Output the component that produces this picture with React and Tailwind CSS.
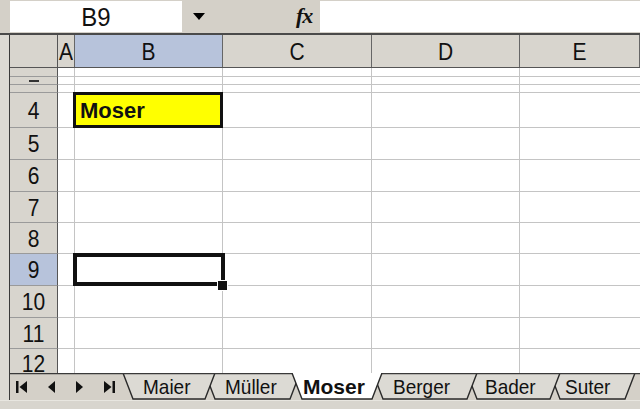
import React from "react";

const FONT = { fontFamily: '"Liberation Sans", Arial, sans-serif' };

const rows = [
  { label: "", h: "h-[9px]" },
  { label: "", h: "h-[8px]", dash: true },
  { label: "", h: "h-[8px]" },
  { label: "4", h: "h-[35px]", moser: true },
  { label: "5", h: "h-[32px]" },
  { label: "6", h: "h-[32px]" },
  { label: "7", h: "h-[31px]" },
  { label: "8", h: "h-[31px]" },
  { label: "9", h: "h-[32px]", sel: true },
  { label: "10", h: "h-[32px]" },
  { label: "11", h: "h-[31px]" },
  { label: "12", h: "h-[24px]", last: true },
];

function TopBar() {
  return (
    <div className="h-[35px] shrink-0 flex items-start bg-[#d4d0c8] border-b-2 border-[#4a4a4a]">
      <div className="ml-[10px] mt-[1px] w-[172px] h-[31px] bg-white flex items-center justify-center">
        <span className="text-[24px] leading-none text-[#111] inline-block scale-y-110">B9</span>
      </div>
      <div className="w-[138px] h-[32px] flex items-center">
        <svg width="24" height="12" viewBox="0 0 24 12" className="ml-[9px]">
          <polygon points="2,3 14,3 8,10" fill="#000" />
        </svg>
        <span
          className="ml-[81px] text-[22px] italic font-bold leading-none text-[#111] tracking-[-1px]"
          style={{ fontFamily: '"Liberation Serif", "Times New Roman", serif' }}
        >
          fx
        </span>
      </div>
      <div className="flex-1 mt-[1px] h-[31px] bg-white" />
    </div>
  );
}

function HeaderRow() {
  const cols = [
    { l: "A", w: "w-[17px]" },
    { l: "B", w: "w-[148px]", sel: true },
    { l: "C", w: "w-[149px]" },
    { l: "D", w: "w-[148px]" },
    { l: "E", w: "flex-1" },
  ];
  return (
    <div className="h-[33px] shrink-0 flex border-b border-[#555]">
      <div className="w-[48px] shrink-0 bg-[#d8d5ce] border-r border-[#555]" />
      {cols.map((c) => (
        <div
          key={c.l}
          className={`${c.w} shrink-0 overflow-hidden flex items-center justify-center border-r border-[#666] ${
            c.sel ? "bg-[#b7c3db]" : "bg-[#d8d5ce]"
          }`}
        >
          <span className="text-[21px] leading-none text-[#111] inline-block scale-y-115">{c.l}</span>
        </div>
      ))}
    </div>
  );
}

function Row({ r }) {
  const bb = r.last ? "" : "border-b";
  return (
    <div className={`${r.h} shrink-0 flex`}>
      <div
        className={`w-[48px] shrink-0 overflow-hidden flex items-center justify-center border-r border-[#555] ${
          r.last ? "" : "border-b border-b-[#9a9a9a]"
        } ${r.sel ? "bg-[#b7c3db]" : "bg-[#d8d5ce]"}`}
      >
        {r.label && (
          <span className={`text-[21px] leading-none text-[#111] inline-block scale-y-115 ${r.last ? "mt-[5px]" : ""}`}>
            {r.label}
          </span>
        )}
        {r.dash && <div className="w-[10px] h-[2px] bg-[#333]" />}
      </div>
      <div className={`w-[17px] shrink-0 bg-white border-r ${bb} border-[#c4c4c4]`} />
      <div className={`w-[148px] shrink-0 bg-white border-r ${bb} border-[#c4c4c4] ${r.moser || r.sel ? "relative z-10" : ""}`}>
        {r.moser && (
          <div className="absolute -left-[2px] -top-[1px] -right-[1px] -bottom-[1px] bg-[#ffff00] border-[3px] border-[#111] flex items-center pl-[4px]">
            <span className="text-[22px] font-bold leading-none text-[#111] mt-[2px]">Moser</span>
          </div>
        )}
        {r.sel && (
          <>
            <div className="absolute -left-[2px] -top-[1px] -right-[3px] -bottom-[1px] border-[4px] border-[#111]" />
            <div className="absolute -right-[6px] -bottom-[6px] w-[11px] h-[11px] bg-[#111] border-[1px] border-white" />
          </>
        )}
      </div>
      <div className={`w-[149px] shrink-0 bg-white border-r ${bb} border-[#c4c4c4]`} />
      <div className={`w-[148px] shrink-0 bg-white border-r ${bb} border-[#c4c4c4]`} />
      <div className={`flex-1 bg-white ${bb} border-[#c4c4c4]`} />
    </div>
  );
}

function TabShapes() {
  const tabs = [
    { n: "Suter", p: [550, 560, 625, 635] },
    { n: "Bader", p: [467, 477, 550, 560] },
    { n: "Berger", p: [373, 383, 467, 477] },
    { n: "Müller", p: [205, 215, 290, 300] },
    { n: "Maier", p: [123, 133, 205, 215] },
  ];
  const shape = (p, fill, key) => (
    <g key={key}>
      <polygon points={`${p[0]},0 ${p[1]},26 ${p[2]},26 ${p[3]},0`} fill={fill} />
      <polyline
        points={`${p[0]},0 ${p[1]},26 ${p[2]},26 ${p[3]},0`}
        fill="none"
        stroke="#2a2a2a"
        strokeWidth="1.4"
      />
    </g>
  );
  return (
    <svg className="absolute inset-0" width="630" height="27" viewBox="10 0 630 27">
      {tabs.map((t) => shape(t.p, "#dcdad4", t.n))}
      <line x1="10" y1="0.5" x2="640" y2="0.5" stroke="#3a3a3a" strokeWidth="1.5" />
      {shape([292, 302, 372, 382], "#ffffff", "Moser")}
    </svg>
  );
}

function TabBar() {
  const labels = [
    { t: "Maier", w: "w-[105px] pl-[23px]" },
    { t: "Müller", w: "w-[78px]" },
    { t: "Moser", w: "w-[90px]", b: true },
    { t: "Berger", w: "w-[92px]" },
    { t: "Bader", w: "w-[80px]" },
    { t: "Suter", w: "w-[75px]" },
  ];
  return (
    <div className="h-[27px] shrink-0 relative bg-[#d4d0c8]">
      <TabShapes />
      <div className="relative flex items-center h-full">
        <svg width="110" height="27" viewBox="0 0 110 27" className="shrink-0">
          <rect x="6" y="8" width="2.5" height="12" fill="#111" />
          <polygon points="17,8 17,20 9.5,14" fill="#111" />
          <polygon points="45,8 45,20 38,14" fill="#111" />
          <polygon points="66,8 66,20 73,14" fill="#111" />
          <polygon points="94,8 94,20 101.5,14" fill="#111" />
          <rect x="102.5" y="8" width="2.5" height="12" fill="#111" />
        </svg>
        {labels.map((l) => (
          <div key={l.t} className={`${l.w} shrink-0 flex items-center`}>
            <span
              className={`leading-none text-[#111] inline-block ${
                l.b ? "text-[21px] font-bold" : "text-[19px] scale-y-110"
              }`}
            >
              {l.t}
            </span>
          </div>
        ))}
      </div>
    </div>
  );
}

export default function App() {
  return (
    <div className="w-[640px] h-[409px] overflow-hidden flex flex-col bg-[#d4d0c8]" style={FONT}>
      <TopBar />
      <div className="h-[365px] shrink-0 flex">
        <div className="w-[10px] shrink-0 bg-[#dcdad4] border-r border-[#3a3a3a]" />
        <div className="flex-1 flex flex-col min-w-0">
          <div className="h-[338px] shrink-0 flex flex-col overflow-hidden">
            <HeaderRow />
            {rows.map((r, i) => (
              <Row key={i} r={r} />
            ))}
          </div>
          <TabBar />
        </div>
      </div>
      <div className="flex-1 bg-[#d8d5ce] border-t border-[#e8e6e0]" />
    </div>
  );
}
